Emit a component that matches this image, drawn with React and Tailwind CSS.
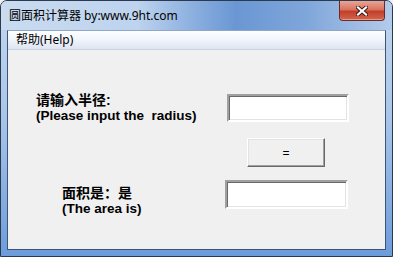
const CloseGlyph = () => (
    <svg width="12" height="10" viewBox="0 0 12 10">
        <path d="M2 1.5 L10 8.5 M10 1.5 L2 8.5" stroke="#3a1612" strokeWidth="4" strokeLinecap="square" />
        <path d="M2 1.5 L10 8.5 M10 1.5 L2 8.5" stroke="#ffffff" strokeWidth="2.2" strokeLinecap="square" />
    </svg>
);

const SunkenBox = ({ className }) => (
    <div
        className={`bg-white border-2 border-t-[#a0a0a0] border-l-[#a0a0a0] border-b-white border-r-white shadow-[inset_1px_1px_0_#696969,inset_-1px_-1px_0_#e3e3e3] ${className}`}
    />
);

const App = () => {
    const uiFont = "font-['Noto_Sans','Noto_Sans_CJK_SC',sans-serif]";
    const labelFont = "font-['Liberation_Sans','Noto_Sans_CJK_SC',sans-serif] font-bold text-black";

    return (
        <div className="w-[393px] h-[257px] bg-[#f0f0f0]">
            <div className="w-[393px] h-[257px] flex flex-col rounded-t-[7px] border border-[#2c3a50] bg-[linear-gradient(to_bottom,#c3d7ee_0%,#a9c6e9_45%,#6d9cdb_100%)] overflow-hidden">
                {/* title bar */}
                <div className="h-[29px] flex items-center bg-[linear-gradient(to_right,#c9dbf0_0%,#bdd3ee_35%,#8fb2e0_48%,#6a97d4_60%,#7fa6da_78%,#b3cbeb_100%)]">
                    <span className={`${uiFont} pl-[8px] text-[12px] leading-[16px] text-black`}>
                        圆面积计算器 by:www.9ht.com
                    </span>
                    <div className="ml-auto mr-[7px] self-start w-[46px] h-[20px] flex items-center justify-center rounded-b-[4px] border border-t-0 border-[#6d2a22] bg-[linear-gradient(to_bottom,#e8a597_0%,#d9735f_45%,#c2402a_55%,#d2654d_100%)] shadow-[inset_0_-1px_0_#e89c88]">
                        <CloseGlyph />
                    </div>
                </div>

                {/* client area */}
                <div className="mx-[6px] mb-[6px] flex-1 flex flex-col border border-[#3b5477] border-t-[#8fa6c4]">
                    <div className="h-[19px] flex items-center border-b border-b-[#c7d3e4] bg-[linear-gradient(to_bottom,#fdfeff_0%,#f2f5fb_45%,#dde5f2_100%)]">
                        <span className={`${uiFont} pl-[8px] text-[12px] leading-[16px] text-black`}>帮助(Help)</span>
                    </div>

                    <div className="flex-1 bg-[#f0f0f0] flex flex-col">
                        <div className="flex items-start mt-[43px]">
                            <div className={`${labelFont} ml-[28px] w-[191px]`}>
                                <div className="text-[14px] leading-[15px]">请输入半径:</div>
                                <div className="text-[13.5px] leading-[15px] whitespace-pre">(Please input the  radius)</div>
                            </div>
                            <SunkenBox className="mt-[1px] w-[122px] h-[28px]" />
                        </div>

                        <div className="mt-[15px] ml-[239px] w-[78px] h-[29px] flex items-center justify-center bg-[#f0f0f0] border border-t-white border-l-white border-b-[#696969] border-r-[#696969] shadow-[inset_-1px_-1px_0_#a0a0a0,inset_1px_1px_0_#e3e3e3]">
                            <span className="font-['Liberation_Sans',sans-serif] text-[12px] leading-[14px] text-black">=</span>
                        </div>

                        <div className="flex items-start mt-[13px]">
                            <div className={`${labelFont} ml-[54px] w-[163px] mt-[6px]`}>
                                <div className="text-[14px] leading-[15px]">面积是：是</div>
                                <div className="text-[13.5px] leading-[15px]">(The area is)</div>
                            </div>
                            <SunkenBox className="w-[123px] h-[29px]" />
                        </div>
                    </div>
                </div>
            </div>
        </div>
    );
};

export default App;
